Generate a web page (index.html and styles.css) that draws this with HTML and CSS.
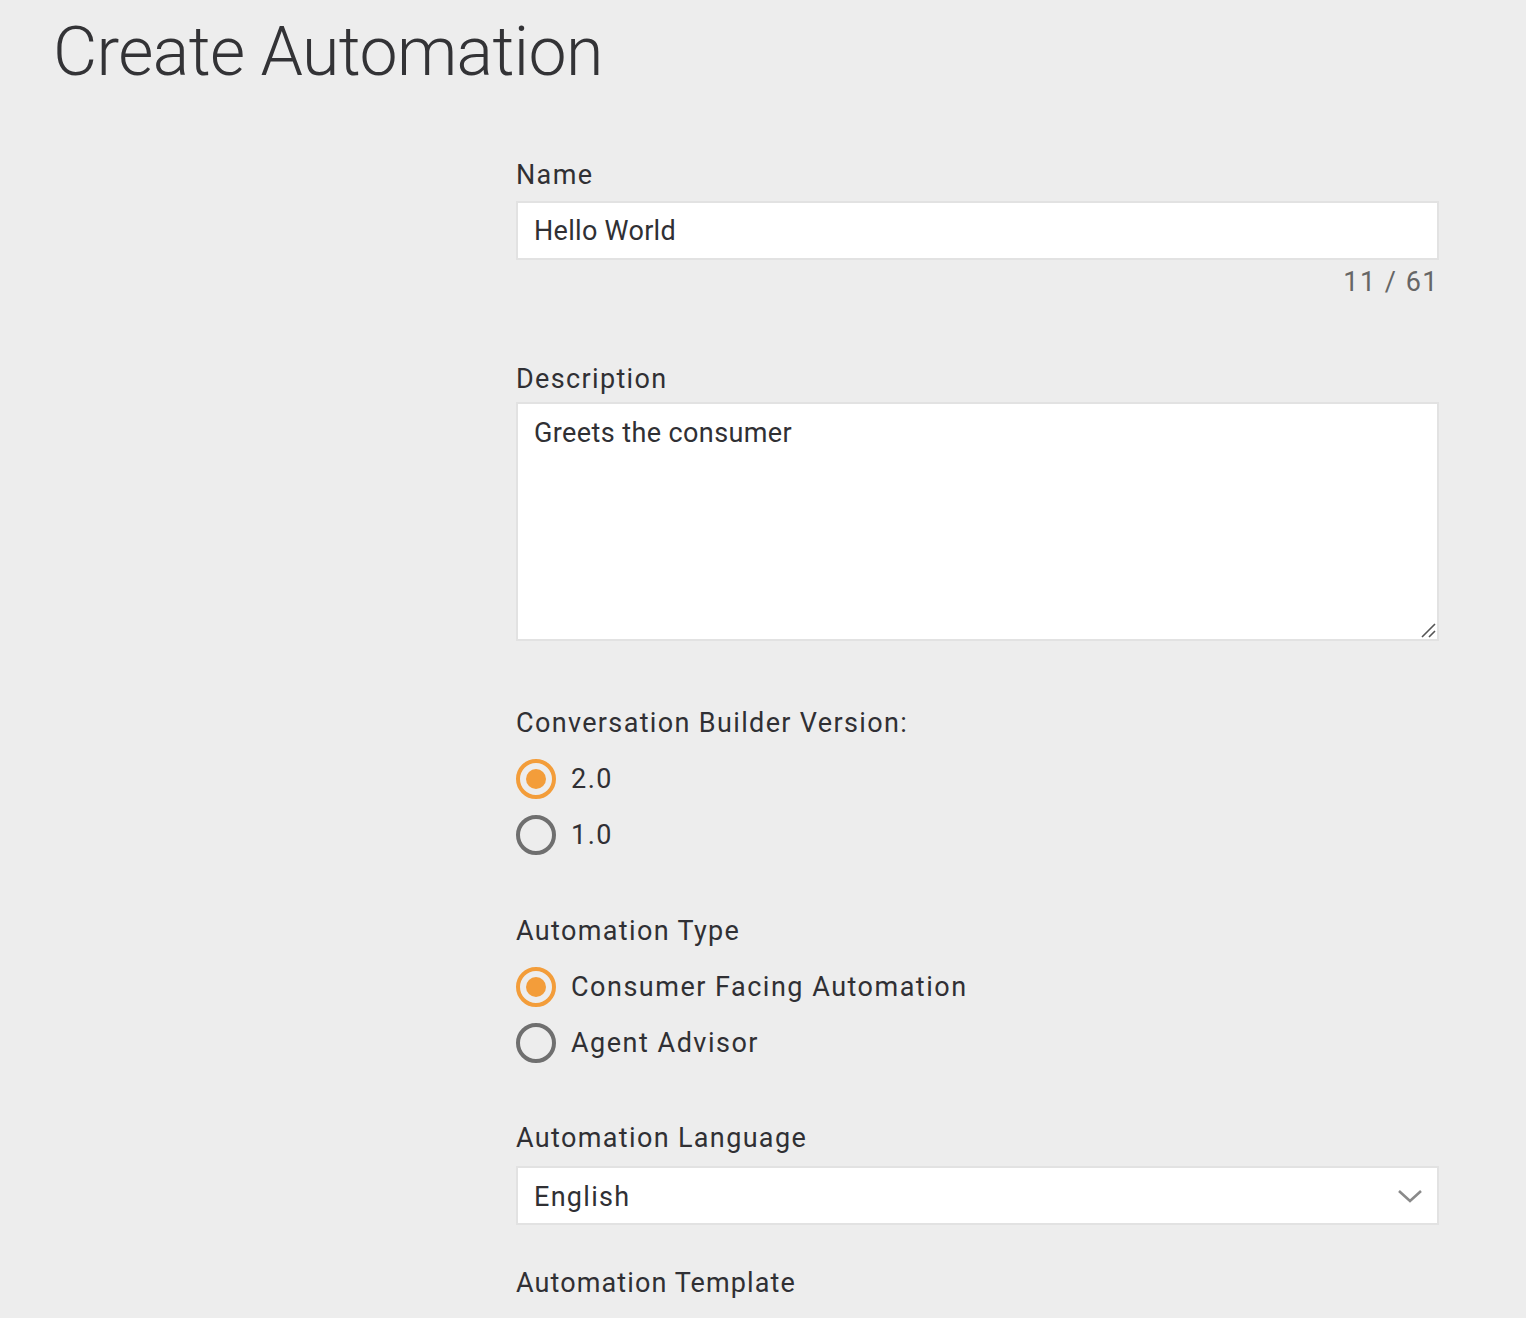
FILE: index.html
```html
<!DOCTYPE html>
<html lang="en">
<head>
<meta charset="utf-8">
<title>Create Automation</title>
<link rel="stylesheet" href="styles.css">
</head>
<body>
<h1 class="page-title">Create Automation</h1>
<form class="form">
  <div class="field field-name">
    <label class="label">Name</label>
    <div class="input">Hello World</div>
    <div class="counter">11 / 61</div>
  </div>
  <div class="field field-desc">
    <label class="label">Description</label>
    <div class="textarea">Greets the consumer
      <svg class="grip" width="16" height="16" viewBox="0 0 16 16"><path d="M2 15 L15 2 M9 15 L15 9" stroke="#555" stroke-width="1.6" fill="none"/></svg>
    </div>
  </div>
  <div class="field field-radio">
    <label class="label">Conversation Builder Version:</label>
    <div class="radio checked"><span class="dot"></span><span>2.0</span></div>
    <div class="radio"><span class="dot"></span><span>1.0</span></div>
  </div>
  <div class="field field-radio">
    <label class="label">Automation Type</label>
    <div class="radio checked"><span class="dot"></span><span>Consumer Facing Automation</span></div>
    <div class="radio"><span class="dot"></span><span>Agent Advisor</span></div>
  </div>
  <div class="field field-lang">
    <label class="label">Automation Language</label>
    <div class="select">English
      <svg class="chev" width="26" height="16" viewBox="0 0 26 16"><path d="M2 3 L13 13 L24 3" stroke="#8a8a8a" stroke-width="2.6" fill="none"/></svg>
    </div>
  </div>
  <div class="field field-tpl">
    <label class="label">Automation Template</label>
  </div>
</form>
</body>
</html>
```
FILE: styles.css
```css
html, body {
  margin: 0;
  padding: 0;
  background: #ededed;
  height: 100%;
  overflow: hidden;
}
body {
  font-family: Roboto, "Liberation Sans", sans-serif;
  color: #303034;
}
.page-title {
  margin: 12px 0 0 53px;
  font-family: Roboto, "Liberation Sans", sans-serif;
  font-weight: 300;
  font-size: 68px;
  line-height: 80px;
  letter-spacing: -0.6px;
  color: #333336;
}
.form {
  margin: 67px 0 0 516px;
  width: 923px;
}
.label {
  display: block;
  font-size: 27px;
  line-height: 32px;
  letter-spacing: 1.35px;
}
.input, .select {
  box-sizing: border-box;
  height: 59px;
  background: #fff;
  border: 2px solid #e2e2e2;
  font-size: 27px;
  line-height: 55px;
  padding: 1px 16px 0;
  letter-spacing: 0.3px;
  margin-top: 10px;
}
.counter {
  text-align: right;
  font-size: 27px;
  line-height: 32px;
  color: #666;
  letter-spacing: 1.5px;
  margin-top: 6px;
}
.field-desc { margin-top: 65px; }
.textarea {
  position: relative;
  box-sizing: border-box;
  height: 239px;
  margin-top: 7px;
  background: #fff;
  border: 2px solid #e2e2e2;
  font-size: 27px;
  line-height: 32px;
  padding: 13px 16px;
  letter-spacing: 0.4px;
}
.grip {
  position: absolute;
  right: 1px;
  bottom: 1px;
}
.field-radio { margin-top: 66px; }
.field-radio + .field-radio { margin-top: 52px; }
.field-radio .label { margin-bottom: 12px; }
.radio {
  display: flex;
  align-items: center;
  height: 56px;
  font-size: 27px;
  letter-spacing: 1.5px;
  gap: 15px;
}
.dot {
  box-sizing: border-box;
  width: 40px;
  height: 40px;
  border-radius: 50%;
  border: 4px solid #6f6f6f;
  display: flex;
  align-items: center;
  justify-content: center;
}
.radio.checked .dot { border-color: #f39d3a; }
.radio.checked .dot::after {
  content: "";
  width: 20px;
  height: 20px;
  border-radius: 50%;
  background: #f39d3a;
}
.field-lang { margin-top: 51px; }
.field-lang .select { margin-top: 12px; padding-top: 2px; }
.select {
  position: relative;
  letter-spacing: 1.3px;
}
.chev {
  position: absolute;
  right: 14px;
  top: 20px;
}
.field-tpl { margin-top: 42px; }
.field-tpl .label { letter-spacing: 1.1px; }
```
